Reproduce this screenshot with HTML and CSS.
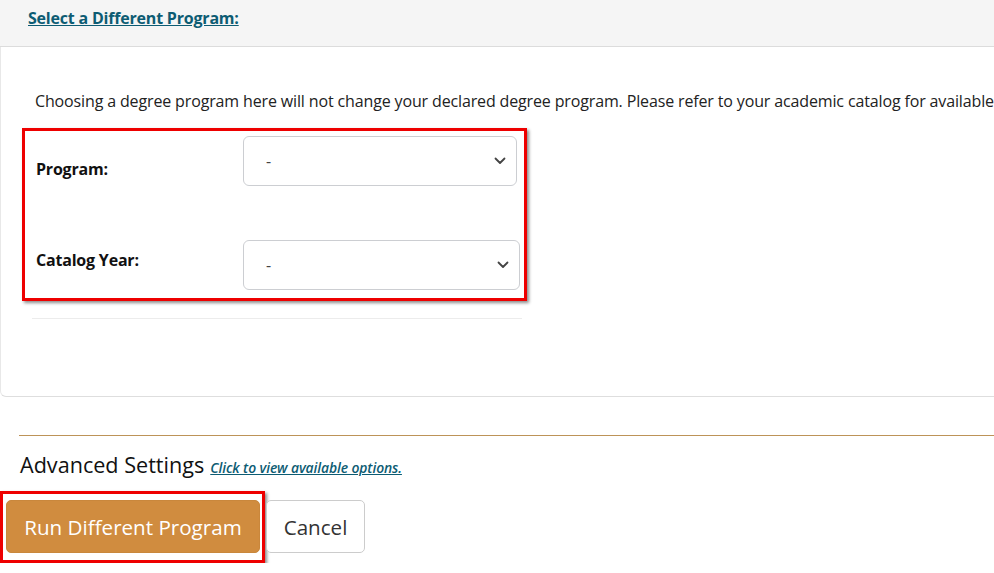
FILE: index.html
```html
<!DOCTYPE html>
<html lang="en">
<head>
<meta charset="utf-8">
<title>Select a Different Program</title>
<link rel="stylesheet" href="styles.css">
</head>
<body>
<div class="header">
  <a href="#" class="header-link">Select a Different Program:</a>
</div>
<div class="card">
  <p class="intro">Choosing a degree program here will not change your declared degree program. Please refer to your academic catalog for available</p>
  <div class="highlight form-box">
    <div class="form-row row-program">
      <label class="form-label">Program:</label>
      <div class="select select-program">
        <span class="select-value">-</span>
        <svg class="chevron" width="12" height="8" viewBox="0 0 12 8"><path d="M1.5 1.5 L6 6 L10.5 1.5" fill="none" stroke="#444" stroke-width="1.8" stroke-linecap="round" stroke-linejoin="round"/></svg>
      </div>
    </div>
    <div class="form-row row-year">
      <label class="form-label">Catalog Year:</label>
      <div class="select select-year">
        <span class="select-value">-</span>
        <svg class="chevron" width="12" height="8" viewBox="0 0 12 8"><path d="M1.5 1.5 L6 6 L10.5 1.5" fill="none" stroke="#444" stroke-width="1.8" stroke-linecap="round" stroke-linejoin="round"/></svg>
      </div>
    </div>
  </div>
  <div class="divider"></div>
</div>
<div class="advanced">
  <div class="gold-line"></div>
  <div class="advanced-head">
    <span class="advanced-title">Advanced Settings</span>
    <a href="#" class="advanced-link">Click to view available options.</a>
  </div>
  <div class="actions">
    <div class="highlight btn-box">
      <button class="btn btn-primary">Run Different Program</button>
    </div>
    <button class="btn btn-cancel">Cancel</button>
  </div>
</div>
</body>
</html>
```

FILE: styles.css
```css
html, body {
  margin: 0;
  padding: 0;
  background: #fff;
  width: 994px;
  overflow: hidden;
}
body {
  font-family: "Open Sans", "Noto Sans", "Liberation Sans", sans-serif;
  color: #222;
}
.header {
  height: 47px;
  background: #f5f5f5;
  border-bottom: 1px solid #dcdcdc;
  padding-left: 28px;
  box-sizing: border-box;
  display: flex;
  align-items: flex-start;
  padding-top: 7px;
}
.header-link {
  color: #0d5c73;
  font-weight: 700;
  font-size: 16px;
  text-decoration: underline;
  letter-spacing: -0.2px;
}
.card {
  height: 350px;
  box-sizing: border-box;
  border-bottom: 1px solid #dedede;
  border-left: 1px solid #e8e8e8;
  border-bottom-left-radius: 6px;
  padding-top: 42px;
  overflow: hidden;
}
.intro {
  margin: 0 0 0 34px;
  font-size: 16px;
  line-height: 24px;
  white-space: nowrap;
  letter-spacing: -0.14px;
  color: #222;
}
.highlight {
  border: 3px solid #ee0000;
  box-shadow: 2px 2px 3px rgba(0, 0, 0, 0.45);
}
.form-box {
  margin: 15px 0 0 21px;
  width: 505px;
  height: 173px;
  box-sizing: border-box;
  padding-top: 5px;
}
.form-row {
  display: flex;
  align-items: center;
}
.row-year {
  margin-top: 54px;
}
.form-label {
  width: 218px;
  padding-left: 11px;
  box-sizing: border-box;
  font-weight: 700;
  font-size: 16px;
  color: #111;
  letter-spacing: -0.2px;
}
.row-program .form-label { position: relative; top: 8px; }
.row-year .form-label { position: relative; top: -5px; }
.select {
  height: 50px;
  box-sizing: border-box;
  border: 1px solid #ccced2;
  border-radius: 6px;
  display: flex;
  align-items: center;
  justify-content: space-between;
  padding: 0 10px 0 22px;
}
.select-program { width: 274px; }
.select-year { width: 277px; }
.select-value {
  font-size: 16px;
  color: #444;
}
.chevron { display: block; }
.divider {
  margin: 17px 0 0 31px;
  width: 490px;
  border-top: 1px solid #ececec;
}
.advanced {
  padding-left: 19px;
}
.gold-line {
  margin-top: 38px;
  border-top: 1px solid #bd9358;
}
.advanced-head {
  margin-top: 15px;
  height: 28px;
  line-height: 28px;
  display: flex;
  align-items: baseline;
  padding-left: 1px;
}
.advanced-title {
  font-size: 21.6px;
  color: #111;
}
.advanced-link {
  margin-left: 6px;
  font-size: 13.9px;
  font-style: italic;
  font-weight: 600;
  color: #0d5c73;
  text-decoration: underline;
  letter-spacing: -0.1px;
}
.actions {
  margin-top: 12px;
  margin-left: -19px;
  display: flex;
  align-items: flex-start;
}
.btn-box {
  width: 265px;
  height: 72px;
  box-sizing: border-box;
  padding: 6px 0 0 3px;
}
.btn {
  font-family: inherit;
  font-size: 20.6px;
  height: 53px;
  border-radius: 5px;
  cursor: pointer;
}
.btn-primary {
  width: 254px;
  background: #d08c3f;
  border: 1px solid #c9873c;
  color: #fff;
}
.btn-cancel {
  margin-top: 9px;
  margin-left: 1px;
  width: 99px;
  background: #fff;
  border: 1px solid #cccccc;
  color: #333;
}
```
